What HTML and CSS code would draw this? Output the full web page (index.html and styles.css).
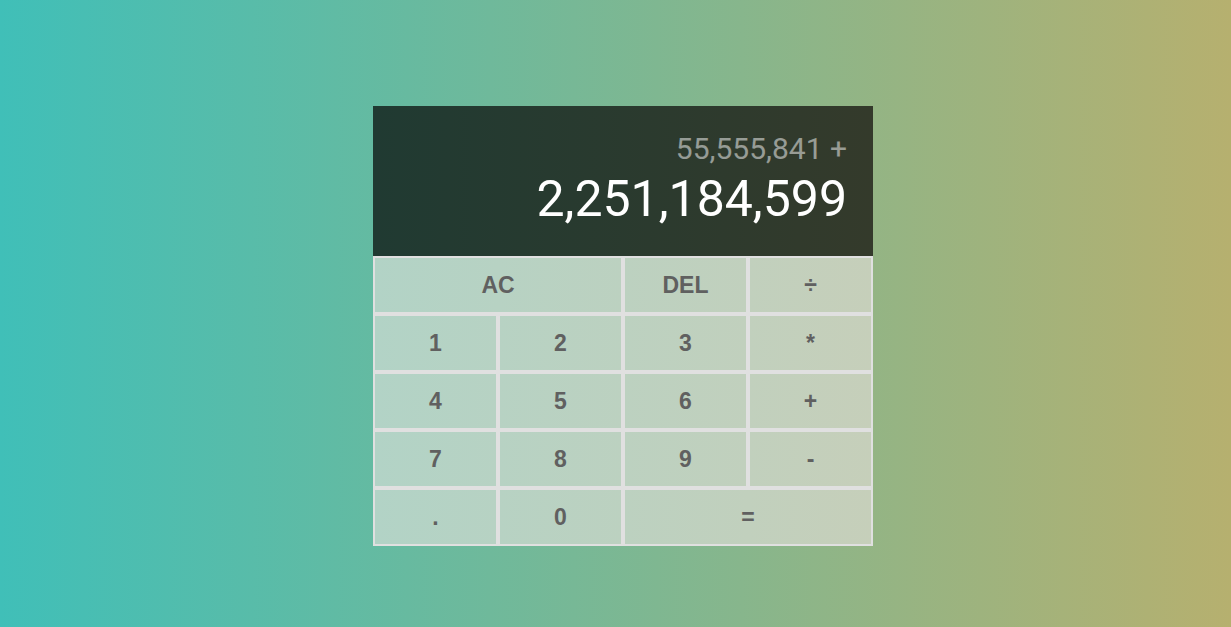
FILE: index.html
```html
<!DOCTYPE html>
<html lang="en">
<head>
<meta charset="utf-8">
<title>Calculator</title>
<link rel="stylesheet" href="styles.css">
</head>
<body>
<main class="page">
  <div class="calculator">
    <div class="output">
      <div class="previous">55,555,841 +</div>
      <div class="current">2,251,184,599</div>
    </div>
    <button class="key span-two">AC</button>
    <button class="key">DEL</button>
    <button class="key">÷</button>
    <button class="key">1</button>
    <button class="key">2</button>
    <button class="key">3</button>
    <button class="key">*</button>
    <button class="key">4</button>
    <button class="key">5</button>
    <button class="key">6</button>
    <button class="key">+</button>
    <button class="key">7</button>
    <button class="key">8</button>
    <button class="key">9</button>
    <button class="key">-</button>
    <button class="key">.</button>
    <button class="key">0</button>
    <button class="key span-two">=</button>
  </div>
</main>
</body>
</html>
```
FILE: styles.css
```css
* {
  box-sizing: border-box;
}

html, body {
  margin: 0;
  padding: 0;
}

body {
  min-height: 100vh;
  background: linear-gradient(to right, #40bfb8, #b6b06f);
  background-attachment: fixed;
  font-family: "Liberation Sans", Arial, sans-serif;
}

.page {
  display: flex;
  justify-content: center;
  align-items: flex-start;
  padding: 106px 0 0 15px;
  min-height: 100vh;
}

.calculator {
  display: grid;
  grid-template-columns: repeat(4, 125px);
  grid-template-rows: 150px repeat(5, 58px);
  background: linear-gradient(to right, #b2d3c6, #c6cfba);
}

.output {
  grid-column: 1 / -1;
  background: linear-gradient(to right, #203a32, #343a2b);
  display: flex;
  flex-direction: column;
  align-items: flex-end;
  justify-content: flex-end;
  gap: 10px;
  padding: 0 26px 32px 10px;
  font-family: Roboto, "Liberation Sans", sans-serif;
  word-break: break-all;
}

.previous {
  color: rgba(255, 255, 255, 0.5);
  font-size: 30px;
  line-height: 30px;
}

.current {
  color: #ffffff;
  font-size: 50px;
  line-height: 50px;
}

.key {
  margin: 0;
  padding: 0;
  cursor: pointer;
  font-family: "Liberation Sans", Arial, sans-serif;
  font-weight: bold;
  font-size: 23px;
  color: #606060;
  border: 2px solid #e0e0e0;
  background: transparent;
  outline: none;
}

.span-two {
  grid-column: span 2;
}
```
